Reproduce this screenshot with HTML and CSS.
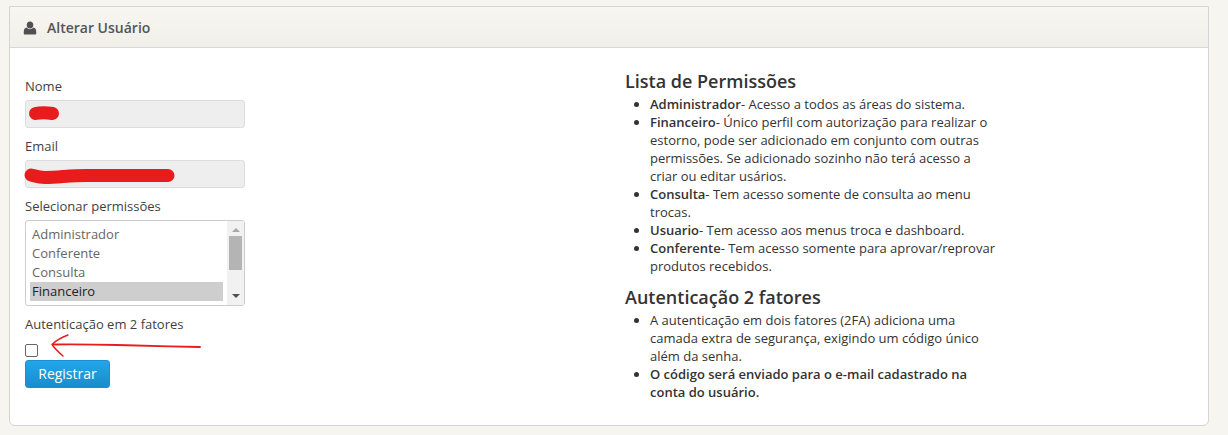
FILE: index.html
```html
<!DOCTYPE html>
<html lang="pt-BR">
<head>
<meta charset="utf-8">
<title>Alterar Usuário</title>
<link rel="stylesheet" href="styles.css">
</head>
<body>
<section class="panel">
  <header class="panel-head">
    <svg class="user-icon" width="14" height="14" viewBox="0 0 14 14"><path d="M7 0.4c-2 0-3.3 1.5-3.3 3.5S5 7.4 7 7.4s3.3-1.500 3.300-3.500S9 .4 7 .4z"/><path d="M3.700 6.600C2 7 1 8 .9 9.800L.7 12.300c0 .8.500 1.300 1.300 1.300h10c.8 0 1.300-.5 1.300-1.300l-.2-2.500C13 8 12 7 10.300 6.600 9.500 7.700 8.400 8.300 7 8.300S4.500 7.700 3.700 6.600z"/></svg>
    <h1 class="panel-title">Alterar Usuário</h1>
  </header>
  <div class="panel-body">
    <form class="form-col">
      <label class="field-label">Nome</label>
      <div class="input">
        <svg class="scribble" width="34" height="26" viewBox="0 0 34 26"><path d="M9.500 12.500C14 11.500 21 11.500 26.500 12.500" fill="none" stroke="#e81c1c" stroke-width="13" stroke-linecap="round"/></svg>
      </div>
      <label class="field-label">Email</label>
      <div class="input">
        <svg class="scribble" width="154" height="26" viewBox="0 0 154 26"><path d="M5 14C9 15 13 16.500 19 16.500 32 16.500 44 14.500 60 14.500L142 14.500" fill="none" stroke="#e81c1c" stroke-width="13" stroke-linecap="round"/></svg>
      </div>
      <label class="field-label">Selecionar permissões</label>
      <div class="listbox">
        <ul class="options">
          <li>Administrador</li>
          <li>Conferente</li>
          <li>Consulta</li>
          <li class="selected">Financeiro</li>
        </ul>
        <div class="scrollbar">
          <span class="arrow arrow-up"></span>
          <span class="thumb"></span>
          <span class="arrow arrow-down"></span>
        </div>
      </div>
      <label class="field-label two-fa">Autenticação em 2 fatores</label>
      <span class="checkbox"></span>
      <button class="btn" type="button">Registrar</button>
    </form>
    <div class="info-col">
      <h2 class="info-title">Lista de Permissões</h2>
      <ul class="info-list">
        <li><b>Administrador</b>- Acesso a todos as áreas do sistema.</li>
        <li><b>Financeiro</b>- Único perfil com autorização para realizar o estorno, pode ser adicionado em conjunto com outras permissões. Se adicionado sozinho não terá acesso a criar ou editar usários.</li>
        <li><b>Consulta</b>- Tem acesso somente de consulta ao menu trocas.</li>
        <li><b>Usuario</b>- Tem acesso aos menus troca e dashboard.</li>
        <li><b>Conferente</b>- Tem acesso somente para aprovar/reprovar produtos recebidos.</li>
      </ul>
      <h2 class="info-title second">Autenticação 2 fatores</h2>
      <ul class="info-list">
        <li>A autenticação em dois fatores (2FA) adiciona uma camada extra de segurança, exigindo um código único além da senha.</li>
        <li><b>O código será enviado para o e-mail cadastrado na conta do usuário.</b></li>
      </ul>
    </div>
  </div>
  <svg class="red-arrow" width="154" height="26" viewBox="0 0 154 26"><path d="M153 15C125 14.500 100 13.500 70 13 50 12.500 25 12.300 6 12.500" fill="none" stroke="#e81c1c" stroke-width="1.800" stroke-linecap="round"/><path d="M21 3C14 5.500 9 8.500 5 12.500 8 17 12 20.500 16 24" fill="none" stroke="#e81c1c" stroke-width="1.400" stroke-linecap="round" stroke-linejoin="round"/></svg>
</section>
</body>
</html>
```
FILE: styles.css
```css
* { box-sizing: border-box; }
html, body { margin: 0; height: 100%; }
body {
  background: #f7f5f0;
  padding: 6px 19px 0 9px;
  font-family: "Open Sans", sans-serif;
  font-size: 13px;
  line-height: 18px;
  color: #333;
  overflow: hidden;
}
.panel {
  position: relative;
  height: 420px;
  background: #fff;
  border: 1px solid #d5d5d5;
  border-radius: 0 0 6px 6px;
}
.panel-head {
  display: flex;
  align-items: center;
  height: 41px;
  padding: 1px 0 0 13px;
  background: linear-gradient(#f8f6f1, #f1efea);
  border-bottom: 1px solid #d8d8d8;
}
.user-icon { fill: #505050; }
.panel-title {
  margin: 1px 0 0 10px;
  font-size: 14px;
  font-weight: 600;
  color: #555;
}
.panel-body { display: flex; }
.form-col {
  display: flex;
  flex-direction: column;
  align-items: flex-start;
  width: 615px;
  padding: 29px 0 0 15px;
}
.field-label { height: 18px; color: #3f3f3f; }
.input {
  position: relative;
  width: 220px;
  height: 28px;
  margin: 5px 0 9px;
  background: #eee;
  border: 1px solid #ddd;
  border-radius: 3px;
}
.scribble { position: absolute; left: 0; top: 0; overflow: visible; }
.listbox {
  display: flex;
  width: 220px;
  height: 86px;
  margin: 5px 0 0;
  background: #fff;
  border: 1px solid #ccc;
  border-radius: 3px;
}
.options {
  flex: 1;
  margin: 0;
  padding: 4px 4px 0;
  list-style: none;
  color: #666;
}
.options li { height: 19px; line-height: 19px; padding-left: 2px; }
.options .selected { background: #cecece; color: #222; }
.scrollbar {
  display: flex;
  flex-direction: column;
  align-items: center;
  width: 17px;
  margin: 0;
  padding: 0 2px;
  background: #f1f1f1;
}
.arrow { width: 0; height: 0; border-left: 4px solid transparent; border-right: 4px solid transparent; }
.arrow-up { margin: 7px 0 4px; border-bottom: 4px solid #a8a8a8; }
.arrow-down { margin: 24px 0 0; border-top: 4px solid #505050; }
.thumb { width: 13px; height: 34px; background: #b4b4b4; }
.two-fa { margin-top: 9px; }
.checkbox {
  width: 13px;
  height: 13px;
  margin-top: 11px;
  background: #fff;
  border: 1px solid #666;
  border-radius: 2px;
}
.btn {
  width: 85px;
  height: 28px;
  margin-top: 3px;
  padding: 0;
  color: #fff;
  font: 14px/18px "Open Sans", sans-serif;
  background: linear-gradient(#21a7ea, #1a8ccb);
  border: 1px solid #1c90cf;
  border-radius: 3px;
}
.info-col { width: 372px; padding-top: 22px; }
.info-title {
  margin: 0 0 3px;
  font-size: 18px;
  line-height: 22px;
  font-weight: 600;
  color: #333;
}
.info-title.second { margin: 11px 0 3px; }
.info-list { margin: 0; padding: 0 0 0 25px; }
.info-list b { font-weight: 600; }
.red-arrow { position: absolute; left: 37px; top: 325px; }
```
